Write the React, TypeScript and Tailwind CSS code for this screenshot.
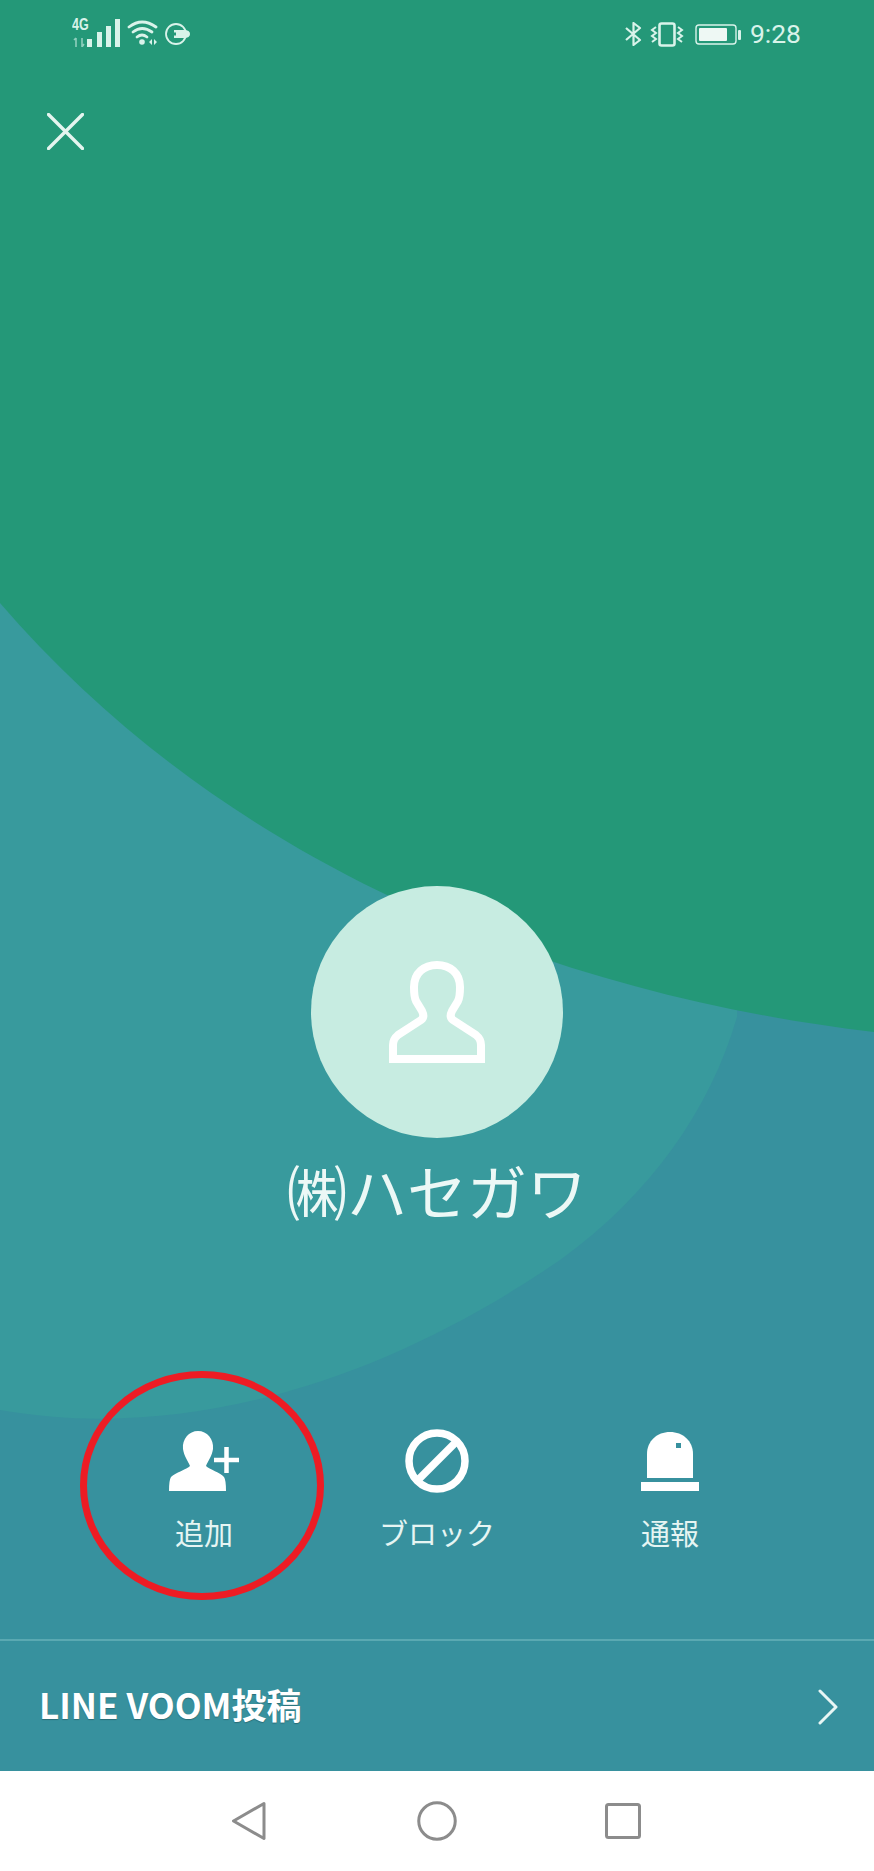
import React from "react";

const CJK = "font-['Noto_Sans_CJK_JP','Noto_Sans','Liberation_Sans',sans-serif]";

function Background() {
  return (
    <svg className="absolute left-0 top-0 w-[874px] h-[1771px]" viewBox="0 0 874 1771" aria-hidden="true">
      <rect width="874" height="1771" fill="#37919e" />
      <path d="M0 1410 C200 1445 400 1370 560 1260 C650 1195 710 1110 737 1017 L737 600 L0 600 Z" fill="#389a9d" />
      <path d="M0 603 C230 870 560 995 874 1032 L874 0 L0 0 Z" fill="#249878" />
    </svg>
  );
}

function StatusLeft() {
  return (
    <div className="flex items-start gap-[7px] text-[#d9f3ea]">
      <div className="relative w-[48px] h-[28px]">
        <span className="absolute left-0 top-[-2px] origin-top-left scale-x-[0.78] text-[16px] leading-[16px] font-bold font-['Liberation_Sans',sans-serif]">4G</span>
        <svg className="absolute left-0 top-0" width="48" height="28" viewBox="0 0 48 28" aria-hidden="true">
          <g stroke="#8fcfbd" strokeWidth="1.6" fill="none">
            <path d="M4 28 V19 M2 21 L4 19 M10 19 V28 L12 25" />
          </g>
          <rect x="15" y="20" width="5" height="8" fill="currentColor" />
          <rect x="25" y="13" width="5" height="15" fill="currentColor" />
          <rect x="34" y="7" width="5" height="21" fill="currentColor" />
          <rect x="43" y="0" width="5" height="28" fill="currentColor" />
        </svg>
      </div>
      <svg width="31" height="26" viewBox="0 0 31 26" className="mt-[1px]" aria-hidden="true">
        <g fill="none" stroke="currentColor" strokeWidth="2.8" strokeLinecap="round">
          <path d="M2 7 Q15 -3 29 7" />
          <path d="M6 12 Q15 5 25 12" />
          <path d="M10 17 Q15 13 20 17" />
        </g>
        <circle cx="15" cy="22" r="2.8" fill="currentColor" />
        <path d="M22 22 L25 19 V25 Z M27 19 L30 22 L27 25 Z" fill="currentColor" />
      </svg>
      <svg width="26" height="24" viewBox="0 0 26 24" className="mt-[3px]" aria-hidden="true">
        <circle cx="11" cy="12" r="10" fill="none" stroke="currentColor" strokeWidth="1.8" />
        <path d="M9 8 H19 Q25 8 25 12 Q25 16 19 16 H9 Z" fill="currentColor" />
        <rect x="8" y="10.5" width="3" height="3" fill="#249878" />
      </svg>
    </div>
  );
}

function StatusRight() {
  return (
    <div className="flex items-center text-[#d9f3ea]">
      <svg width="17" height="24" viewBox="0 0 17 24" aria-hidden="true">
        <path d="M1 6 L15 18 L8.5 23 V1 L15 6 L1 18" fill="none" stroke="currentColor" strokeWidth="2.2" strokeLinejoin="round" />
      </svg>
      <svg width="34" height="25" viewBox="0 0 34 25" className="ml-[8px]" aria-hidden="true">
        <rect x="9.5" y="1.5" width="15" height="22" rx="2" fill="none" stroke="currentColor" strokeWidth="2.6" />
        <path d="M6 5 L2 8 L6 11 L2 14 L6 17 L2 20 M28 5 L32 8 L28 11 L32 14 L28 17 L32 20" fill="none" stroke="currentColor" strokeWidth="2" />
      </svg>
      <svg width="46" height="21" viewBox="0 0 46 21" className="ml-[11px]" aria-hidden="true">
        <rect x="1" y="1" width="40" height="19" rx="3" fill="none" stroke="currentColor" strokeWidth="1.4" />
        <rect x="4" y="4" width="28" height="13" rx="1" fill="#eef8f4" />
        <rect x="43" y="6" width="3" height="10" rx="1" fill="currentColor" />
      </svg>
      <span className="ml-[9px] text-[26.5px] leading-[30px] font-['Roboto',sans-serif]">9:28</span>
    </div>
  );
}

function Action({ icon, label }: { icon: React.ReactNode; label: string }) {
  return (
    <div className="w-[233px] flex flex-col items-center">
      <div className="h-[64px] flex items-center justify-center">{icon}</div>
      <span className={`mt-[25px] text-[29px] leading-[28px] text-[#e6f5f3] ${CJK}`}>{label}</span>
    </div>
  );
}

export default function App() {
  return (
    <div className="relative w-[874px] h-[1871px] overflow-hidden flex flex-col bg-white">
      <Background />

      <div className="relative flex flex-col flex-1">
        <div className="h-[66px] pt-[19px] pl-[72px] pr-[73px] flex justify-between items-start">
          <StatusLeft />
          <StatusRight />
        </div>

        <div className="pl-[47px] pt-[47px]">
          <svg width="37" height="37" viewBox="0 0 37 37" aria-hidden="true">
            <path d="M1.5 1.5 L35.5 35.5 M35.5 1.5 L1.5 35.5" stroke="#e4f5ef" strokeWidth="3.4" strokeLinecap="round" />
          </svg>
        </div>

        <div className="mt-[736px] mx-auto w-[252px] h-[252px] rounded-full bg-[#c7ece1] flex items-center justify-center">
          <svg width="96" height="102" viewBox="0 0 96 102" aria-hidden="true">
            <path d="M4 98 V84 Q4 78 9 74 L32 59 Q36 56 33 50 L27 40 Q25 36 25 26 C25 12 35 4 48 4 C61 4 71 12 71 26 Q71 36 69 40 L63 50 Q60 56 64 59 L87 74 Q92 78 92 84 V98 Z" fill="none" stroke="#ffffff" strokeWidth="8" />
          </svg>
        </div>

        <div className={`mt-[22px] h-[60px] text-center text-[60px] leading-[60px] text-[#ecf8f6] font-normal ${CJK}`}>㈱ハセガワ</div>

        <div className="mt-[209px] flex justify-center">
          <Action
            label="追加"
            icon={
              <svg width="70" height="60" viewBox="0 0 70 60" aria-hidden="true">
                <path d="M29 0 C38 0 45 8 44 18 C43 25 39 30 37 35 C40 38 52 42 55 46 Q57 49 57 60 H0 Q0 49 2 46 C6 42 18 38 21 35 C19 30 15 25 14 18 C13 8 20 0 29 0 Z" fill="#ffffff" />
                <path d="M45 29 H70 M57.5 16 V42" stroke="#ffffff" strokeWidth="4.5" fill="none" />
              </svg>
            }
          />
          <Action
            label="ブロック"
            icon={
              <svg width="64" height="64" viewBox="0 0 64 64" aria-hidden="true">
                <circle cx="32" cy="32" r="28" fill="none" stroke="#ffffff" strokeWidth="7.5" />
                <path d="M12 52 L52 12" stroke="#ffffff" strokeWidth="7.5" />
              </svg>
            }
          />
          <Action
            label="通報"
            icon={
              <svg width="58" height="59" viewBox="0 0 58 59" aria-hidden="true">
                <path d="M6 46 V22 C6 9 16 0 29 0 C42 0 52 9 52 22 V46 Z" fill="#ffffff" />
                <rect x="35" y="11" width="5" height="5" fill="#37919e" />
                <rect x="0" y="50" width="58" height="9" fill="#ffffff" />
              </svg>
            }
          />
        </div>

        <div className="mt-[93px] h-[1.5px] bg-[#5aa9b2]" />

        <div className="flex-1 flex items-center justify-between pl-[39px] pr-[36px]">
          <span className={`mb-[4px] text-[35px] leading-[40px] font-bold text-white [text-shadow:0_1px_1px_rgba(0,0,0,0.25)] ${CJK}`}>LINE VOOM投稿</span>
          <svg width="20" height="36" viewBox="0 0 20 36" className="mt-[2px]" aria-hidden="true">
            <path d="M2 2 L18 18 L2 34" fill="none" stroke="#e8f6f5" strokeWidth="3" strokeLinecap="round" strokeLinejoin="round" />
          </svg>
        </div>
      </div>

      <div className="relative h-[100px] bg-white flex items-center justify-center pr-[2px]">
        <svg width="36" height="40" viewBox="0 0 36 40" aria-hidden="true">
          <path d="M33 2.5 L2.5 20 L33 37.5 Z" fill="none" stroke="#8c8c8c" strokeWidth="3" strokeLinejoin="round" />
        </svg>
        <svg width="40" height="40" viewBox="0 0 40 40" className="ml-[150px]" aria-hidden="true">
          <circle cx="20" cy="20" r="18.25" fill="none" stroke="#8c8c8c" strokeWidth="3" />
        </svg>
        <svg width="36" height="36" viewBox="0 0 36 36" className="ml-[148px]" aria-hidden="true">
          <rect x="1.5" y="1.5" width="33" height="33" rx="2" fill="none" stroke="#8c8c8c" strokeWidth="3" />
        </svg>
      </div>

      <svg className="absolute left-[80px] top-[1371px]" width="244" height="229" viewBox="0 0 244 229" aria-hidden="true">
        <ellipse cx="122" cy="114.5" rx="118.5" ry="111" fill="none" stroke="#ed1c24" strokeWidth="7" />
      </svg>
    </div>
  );
}
